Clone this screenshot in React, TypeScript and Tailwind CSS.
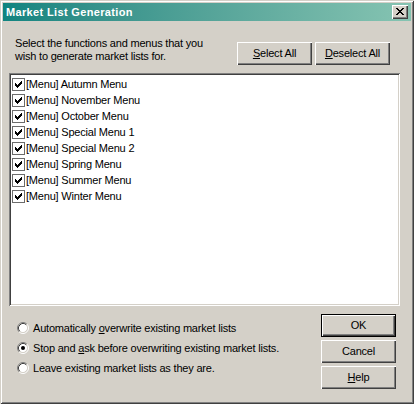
import React from "react";

const items = [
  "[Menu] Autumn Menu",
  "[Menu] November Menu",
  "[Menu] October Menu",
  "[Menu] Special Menu 1",
  "[Menu] Special Menu 2",
  "[Menu] Spring Menu",
  "[Menu] Summer Menu",
  "[Menu] Winter Menu",
];

function Check() {
  const cols: [number, number][] = [
    [3, 5],
    [4, 6],
    [5, 7],
    [6, 6],
    [7, 5],
    [8, 4],
    [9, 3],
  ];
  return (
    <svg width="13" height="13" viewBox="0 0 13 13" shapeRendering="crispEdges" className="shrink-0">
      <rect x="0.5" y="0.5" width="12" height="12" fill="#fff" stroke="#6c6c6c" />
      {cols.map(([x, y]) => (
        <rect key={x} x={x} y={y} width="1" height="3" fill="#000" />
      ))}
    </svg>
  );
}

function Radio({ on }: { on?: boolean }) {
  return (
    <svg width="12" height="12" viewBox="0 0 12 12" className="shrink-0">
      <circle cx="6" cy="6" r="4.5" fill="#fff" />
      <path d="M2.11 9.89 A5.5 5.5 0 0 1 9.89 2.11" fill="none" stroke="#808080" strokeWidth="1" />
      <path d="M9.89 2.11 A5.5 5.5 0 0 1 2.11 9.89" fill="none" stroke="#fff" strokeWidth="1" />
      <path d="M2.82 9.18 A4.5 4.5 0 0 1 9.18 2.82" fill="none" stroke="#404040" strokeWidth="1" />
      <path d="M9.18 2.82 A4.5 4.5 0 0 1 2.82 9.18" fill="none" stroke="#d4d0c8" strokeWidth="1" />
      {on && <circle cx="6" cy="6" r="2" fill="#000" />}
    </svg>
  );
}

function Btn({
  children,
  def,
}: {
  children: React.ReactNode;
  def?: boolean;
}) {
  return (
    <div
      className={
        def
          ? "w-[75px] h-[23px] flex items-center justify-center border border-black shadow-[inset_1px_1px_0_#fff,inset_-1px_-1px_0_#404040,inset_-2px_-2px_0_#808080] bg-[#d4d0c8]"
          : "w-[75px] h-[23px] flex items-center justify-center shadow-[inset_1px_1px_0_#fff,inset_-1px_-1px_0_#404040,inset_-2px_-2px_0_#808080] bg-[#d4d0c8]"
      }
    >
      <span className="leading-[13px]">{children}</span>
    </div>
  );
}

function CloseBtn() {
  const px: [number, number][] = [
    [0, 0], [1, 0], [6, 0], [7, 0],
    [1, 1], [2, 1], [5, 1], [6, 1],
    [2, 2], [3, 2], [4, 2], [5, 2],
    [3, 3], [4, 3],
    [2, 4], [3, 4], [4, 4], [5, 4],
    [1, 5], [2, 5], [5, 5], [6, 5],
    [0, 6], [1, 6], [6, 6], [7, 6],
  ];
  return (
    <div className="ml-auto w-[16px] h-[14px] bg-[#d4d0c8] flex items-center justify-center shadow-[inset_1px_1px_0_#fff,inset_-1px_-1px_0_#404040,inset_-2px_-2px_0_#808080]">
      <svg width="8" height="7" viewBox="0 0 8 7" shapeRendering="crispEdges" className="mb-[1px]">
        {px.map(([x, y]) => (
          <rect key={`${x}-${y}`} x={x} y={y} width="1" height="1" fill="#000" />
        ))}
      </svg>
    </div>
  );
}

export default function App() {
  return (
    <div className="w-[414px] h-[404px] bg-[#d4d0c8] p-[3px] flex flex-col font-['Liberation_Sans',Arial,sans-serif] text-[11px] tracking-[-0.2px] text-black shadow-[inset_1px_1px_0_#d4d0c8,inset_-1px_-1px_0_#404040,inset_2px_2px_0_#fff,inset_-2px_-2px_0_#808080]">
      <div className="h-[18px] flex items-center bg-linear-to-r from-[#0f8480] to-[#86c4b2] pl-[3px] pr-[3px]">
        <span className="text-white font-bold text-[11px] tracking-[0.35px] leading-[13px]">
          Market List Generation
        </span>
        <CloseBtn />
      </div>

      <div className="flex h-[36px] mt-[16px]">
        <div className="ml-[12px] w-[222px] leading-[13px]">
          Select the functions and menus that you
          <br />
          wish to generate market lists for.
        </div>
        <div className="flex gap-[3px] mt-[5px]">
          <Btn>
            <span className="underline underline-offset-[1px]">S</span>elect All
          </Btn>
          <Btn>
            <span className="underline underline-offset-[1px]">D</span>eselect All
          </Btn>
        </div>
      </div>

      <div className="ml-[6px] w-[391px] h-[233px] bg-white shadow-[inset_1px_1px_0_#808080,inset_-1px_-1px_0_#fff,inset_2px_2px_0_#404040,inset_-2px_-2px_0_#d4d0c8] pt-[3px] pl-[3px]">
        {items.map((t) => (
          <div key={t} className="h-[16px] flex items-center">
            <Check />
            <span className="ml-[1px] leading-[13px]">{t}</span>
          </div>
        ))}
      </div>

      <div className="flex">
        <div className="flex flex-col mt-[12px] ml-[14px]">
          <div className="h-[20px] flex items-center gap-[4px]">
            <Radio />
            <span className="leading-[13px]">
              Automatically <span className="underline underline-offset-[1px]">o</span>verwrite existing market lists
            </span>
          </div>
          <div className="h-[20px] flex items-center gap-[4px]">
            <Radio on />
            <span className="leading-[13px]">
              Stop and <span className="underline underline-offset-[1px]">a</span>sk before overwriting existing market lists.
            </span>
          </div>
          <div className="h-[20px] flex items-center gap-[4px]">
            <Radio />
            <span className="leading-[13px]">Leave existing market lists as they are.</span>
          </div>
        </div>
        <div className="flex flex-col gap-[3px] mt-[8px] ml-auto mr-[15px]">
          <Btn def>OK</Btn>
          <Btn>Cancel</Btn>
          <Btn>
            <span className="underline underline-offset-[1px]">H</span>elp
          </Btn>
        </div>
      </div>
    </div>
  );
}
